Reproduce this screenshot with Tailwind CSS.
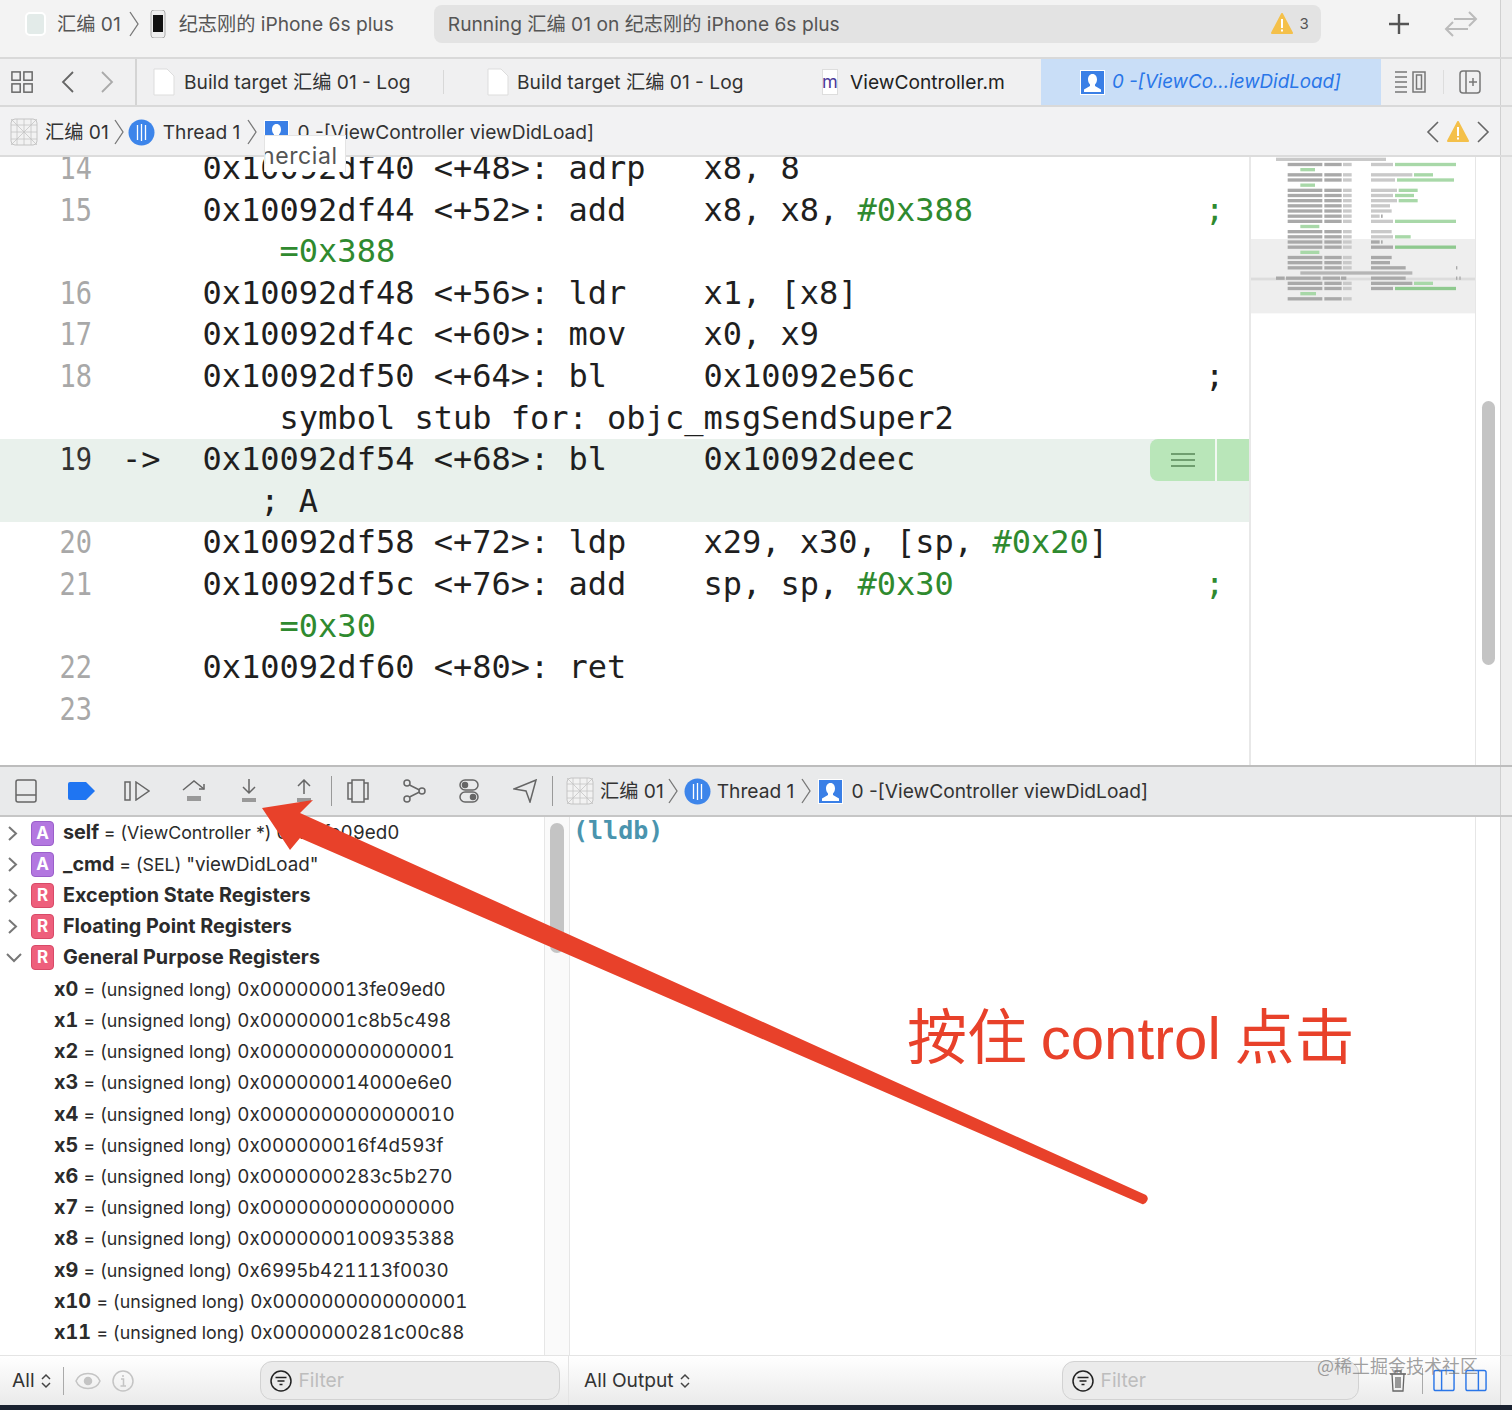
<!DOCTYPE html>
<html lang="en">
<head>
  <meta charset="UTF-8">
  <title>Xcode debugger</title>
  <script src="https://cdn.jsdelivr.net/npm/@tailwindcss/browser@4"></script>
</head>
<body class="bg-white">
<div class="relative w-[1512px] h-[1410px] overflow-hidden flex flex-col font-['Inter','Noto_Sans_CJK_SC',sans-serif] text-[#333]">

  <!-- toolbar -->
  <div class="h-[59px] shrink-0 flex bg-[#f3f3f3] border-b-2 border-[#d9d9d9]">
    <div class="w-[1500px] flex items-center text-[19.2px] text-[#555] pb-[9px]">
      <div class="ml-[25px] w-[21px] h-[24px] rounded-[5px] bg-[#e3ebe9] border-2 border-white"></div>
      <span class="ml-[11px]">汇编 01</span>
      <svg class="ml-[8px]" width="10" height="26" viewBox="0 0 10 26" fill="none" stroke="#777" stroke-width="1.3"><path d="M1 1l8 12L1 25"/></svg>
      <svg class="ml-[11px]" width="16" height="28" viewBox="0 0 16 28"><rect x="1" width="14" height="28" rx="3" fill="#eee" stroke="#aaa"/><rect x="3" y="5" width="10" height="17" fill="#111"/></svg>
      <span class="ml-[13px]">纪志刚的 iPhone 6s plus</span>
      <div class="ml-[40px] w-[887px] h-[38px] rounded-[8px] bg-[#e3e3e3] flex items-center pl-[14px] pr-[12px]">
        <span>Running 汇编 01 on 纪志刚的 iPhone 6s plus</span>
        <svg class="ml-auto" width="22" height="22" viewBox="0 0 22 22"><path d="M11 1L21 20H1z" fill="#f4c04a" stroke="#f4c04a" stroke-width="2" stroke-linejoin="round"/><rect x="10" y="6" width="2" height="9" fill="#fff"/><rect x="10" y="16.500" width="2" height="2" fill="#fff"/></svg>
        <span class="ml-[7px] text-[15px]">3</span>
      </div>
      <svg class="ml-[67px]" width="22" height="22" viewBox="0 0 22 22" stroke="#555" stroke-width="2.400"><path d="M11 1v20M1 11h20"/></svg>
      <svg class="ml-[34px]" width="34" height="26" viewBox="0 0 34 26" fill="none" stroke="#bbb" stroke-width="2"><path d="M2 18h22M9 11l-7 7 7 7M10 8h22M25 1l7 7-7 7"/></svg>
    </div>
    <div class="flex-1 border-l border-[#d0d0d0] bg-[#eeeeee]"></div>
  </div>

  <!-- tabs -->
  <div class="h-[48px] shrink-0 flex bg-[#f0f0f1] border-b-2 border-[#d9d9d9] text-[19.2px] text-[#333]">
    <div class="w-[1500px] flex items-center">
      <div class="w-[137px] h-full flex items-center border-r-2 border-[#d4d4d4]">
        <svg class="ml-[11px]" width="23" height="23" viewBox="0 0 25 25" fill="none" stroke="#666" stroke-width="1.600"><rect x="1" y="1" width="9" height="9"/><rect x="14" y="1" width="9" height="9"/><rect x="1" y="14" width="9" height="9"/><rect x="14" y="14" width="9" height="9"/></svg>
        <svg class="ml-[27px]" width="14" height="22" viewBox="0 0 14 22" fill="none" stroke="#666" stroke-width="1.800"><path d="M12 1L2 11l10 10"/></svg>
        <svg class="ml-[25px]" width="14" height="22" viewBox="0 0 14 22" fill="none" stroke="#aaa" stroke-width="1.800"><path d="M2 1l10 10L2 21"/></svg>
      </div>
      <div class="w-[306px] flex items-center pl-[16px]">
        <svg width="22" height="28" viewBox="0 0 22 28"><path d="M1 1h13l7 7v19H1z" fill="#fff" stroke="#ddd"/></svg>
        <span class="ml-[9px]">Build target 汇编 01 - Log</span>
      </div>
      <div class="w-px h-[24px] bg-[#d8d8d8]"></div>
      <div class="w-[333px] flex items-center pl-[43px]">
        <svg width="22" height="28" viewBox="0 0 22 28"><path d="M1 1h13l7 7v19H1z" fill="#fff" stroke="#ddd"/></svg>
        <span class="ml-[8px]">Build target 汇编 01 - Log</span>
      </div>
      <div class="w-[264px] flex items-center pl-[45px]">
        <div class="w-[16px] h-[26px] bg-white border border-[#ddd] flex items-center justify-center text-[18px] text-[#4b3a9a]">m</div>
        <span class="ml-[12px] text-[#222]">ViewController.m</span>
      </div>
      <div class="w-[340px] h-full bg-[#c9def7] flex items-center pl-[39px] text-[#2a76e8] italic text-[18.8px]">
        <svg width="25" height="25" viewBox="0 0 25 25"><rect width="25" height="25" fill="#fff"/><rect x="1" y="1" width="23" height="23" fill="#3a7fe6"/><path d="M12.500 4c3 0 4.500 2.500 4.500 5.500 0 2-1 4-2 5v1.500l6 3.500V22H4v-2.500L10 16v-1.500c-1-1-2-3-2-5C8 6.500 9.500 4 12.500 4z" fill="#fff"/></svg>
        <span class="ml-[7px]">0 -[ViewCo...iewDidLoad]</span>
      </div>
      <svg class="ml-[14px]" width="32" height="24" viewBox="0 0 32 24" fill="none" stroke="#777" stroke-width="1.500"><path d="M0 2h12M0 7h12M0 12h12M0 17h12M0 22h12"/><rect x="18" y="2" width="12" height="20"/><rect x="21.500" y="5" width="5" height="14"/></svg>
      <div class="ml-[16px] w-px h-[24px] bg-[#ddd]"></div>
      <svg class="ml-[15px]" width="22" height="24" viewBox="0 0 22 24" fill="none" stroke="#777" stroke-width="1.500"><rect x="1" y="1" width="20" height="22" rx="3"/><path d="M7 1v22M14 8v8M10 12h8"/></svg>
    </div>
    <div class="flex-1 border-l border-[#d0d0d0] bg-[#eeeeee]"></div>
  </div>

  <!-- jump bar -->
  <div class="h-[50px] shrink-0 flex bg-[#f2f2f3] border-b-2 border-[#dcdcdc] text-[19.2px] text-[#333]">
    <div class="w-[1500px] flex items-center pt-[2px]">
      <svg class="ml-[10px]" width="28" height="28" viewBox="0 0 28 28" fill="#f2f2f2" stroke="#c4c4c4"><rect x="1" y="1" width="26" height="26" rx="4"/><path d="M1 7h26M1 14h26M1 21h26M7 1v26M14 1v26M21 1v26M1 1l26 26M27 1L1 27" stroke-width=".8"/></svg>
      <span class="ml-[7px]">汇编 01</span>
      <svg class="ml-[5px]" width="10" height="26" viewBox="0 0 10 26" fill="none" stroke="#777" stroke-width="1.300"><path d="M1 1l8 12L1 25"/></svg>
      <svg class="ml-[4px]" width="27" height="27" viewBox="0 0 27 27"><circle cx="13.500" cy="13.500" r="13" fill="#3d85ea"/><path d="M9.500 6v15M13.500 5v17M17.500 6v15" stroke="#fff" stroke-width="1.300"/></svg>
      <span class="ml-[8px]">Thread 1</span>
      <svg class="ml-[7px]" width="10" height="26" viewBox="0 0 10 26" fill="none" stroke="#777" stroke-width="1.300"><path d="M1 1l8 12L1 25"/></svg>
      <svg class="ml-[7px]" width="25" height="25" viewBox="0 0 25 25"><rect width="25" height="25" fill="#fff"/><rect x="1" y="1" width="23" height="23" fill="#3a7fe6"/><path d="M12.500 4c3 0 4.500 2.500 4.500 5.500 0 2-1 4-2 5v1.500l6 3.500V22H4v-2.500L10 16v-1.500c-1-1-2-3-2-5C8 6.500 9.500 4 12.500 4z" fill="#fff"/></svg>
      <span class="ml-[8px]">0 -[ViewController viewDidLoad]</span>
      <svg class="ml-auto" width="13" height="22" viewBox="0 0 13 22" fill="none" stroke="#666" stroke-width="1.600"><path d="M12 1L2 11l10 10"/></svg>
      <svg class="ml-[8px]" width="22" height="22" viewBox="0 0 22 22"><path d="M11 1L21 20H1z" fill="#f4c04a" stroke="#f4c04a" stroke-width="2" stroke-linejoin="round"/><rect x="10" y="6" width="2" height="9" fill="#fff"/><rect x="10" y="16.500" width="2" height="2" fill="#fff"/></svg>
      <svg class="ml-[8px] mr-[10px]" width="13" height="22" viewBox="0 0 13 22" fill="none" stroke="#666" stroke-width="1.600"><path d="M1 1l10 10L1 21"/></svg>
    </div>
    <div class="flex-1 border-l border-[#d0d0d0] bg-[#eeeeee]"></div>
  </div>

  <!-- editor -->
  <div class="h-[608px] shrink-0 flex bg-white">
    <div id="code" class="w-[1249px] overflow-hidden font-['DejaVu_Sans_Mono',monospace] text-[32px] text-[#1f1f1f]"></div>
    <div class="w-[226px] border-l-2 border-[#e8e8e8]">
      <svg id="mini" width="224" height="160" viewBox="30 21 672 480"></svg>
    </div>
    <div class="w-[25px] border-l border-[#e6e6e6] pt-[244px] pl-[6px]">
      <div class="w-[13px] h-[264px] rounded-full bg-[#c4c4c4]"></div>
    </div>
    <div class="flex-1 border-l border-[#d0d0d0] bg-[#eeeeee]"></div>
  </div>

  <!-- debug bar -->
  <div class="h-[52px] shrink-0 flex bg-[#e9eaeb] border-t-2 border-b-2 border-t-[#bdbdbd] border-b-[#c6c6c6] text-[19.2px] text-[#333]">
    <div class="w-[1500px] flex items-center">
      <svg class="ml-[15px]" width="22" height="24" viewBox="0 0 22 24" fill="none" stroke="#666" stroke-width="1.500"><rect x="1" y="1" width="20" height="22" rx="2"/><path d="M1 16h20"/></svg>
      <svg class="ml-[31px]" width="27" height="18" viewBox="0 0 27 18"><path d="M2 0h16l9 9-9 9H2a2 2 0 0 1-2-2V2a2 2 0 0 1 2-2z" fill="#1f75f2"/></svg>
      <svg class="ml-[29px]" width="26" height="20" viewBox="0 0 26 20" fill="none" stroke="#666" stroke-width="1.500"><rect x="1" y="1" width="5" height="18"/><path d="M12 1l13 9-13 9z"/></svg>
      <svg class="ml-[32px]" width="24" height="22" viewBox="0 0 24 22" fill="none" stroke="#666" stroke-width="1.500"><path d="M1 10L12 1l10 8"/><path d="M22 4v5h-5"/><path d="M5 16h14v5H5z" fill="#999" stroke="none"/></svg>
      <svg class="ml-[34px]" width="18" height="24" viewBox="0 0 18 24" fill="none" stroke="#666" stroke-width="1.500"><path d="M9 0v14M3 8l6 6 6-6"/><path d="M2 19h14v4H2z" fill="#999" stroke="none"/></svg>
      <svg class="ml-[37px]" width="18" height="24" viewBox="0 0 18 24" fill="none" stroke="#666" stroke-width="1.500"><path d="M9 15V1M3 7l6-6 6 6"/><path d="M2 19h14v4H2z" fill="#999" stroke="none"/></svg>
      <div class="ml-[18px] w-px h-[30px] bg-[#999]"></div>
      <svg class="ml-[15px]" width="22" height="24" viewBox="0 0 22 24" fill="none" stroke="#666" stroke-width="1.500"><rect x="5" y="1" width="12" height="22"/><path d="M5 4H1v16h4M17 4h4v16h-4"/></svg>
      <svg class="ml-[33px]" width="24" height="24" viewBox="0 0 24 24" fill="none" stroke="#666" stroke-width="1.500"><circle cx="5" cy="4" r="3"/><circle cx="5" cy="20" r="3"/><circle cx="20" cy="12" r="3"/><path d="M7.500 6l10 5M7.500 18l10-5"/></svg>
      <svg class="ml-[33px]" width="20" height="24" viewBox="0 0 20 24" fill="none" stroke="#666" stroke-width="1.500"><rect x="1" y="1" width="18" height="10" rx="5"/><rect x="1" y="13" width="18" height="10" rx="5"/><circle cx="6" cy="6" r="2.500" fill="#666"/><circle cx="14" cy="18" r="2.500" fill="#666"/></svg>
      <svg class="ml-[34px]" width="24" height="24" viewBox="0 0 24 24" fill="none" stroke="#666" stroke-width="1.500"><path d="M1 10L23 1l-6 22-4-11z"/></svg>
      <div class="ml-[15px] w-px h-[30px] bg-[#999]"></div>
      <svg class="ml-[13px]" width="28" height="28" viewBox="0 0 28 28" fill="#f2f2f2" stroke="#c4c4c4"><rect x="1" y="1" width="26" height="26" rx="4"/><path d="M1 7h26M1 14h26M1 21h26M7 1v26M14 1v26M21 1v26M1 1l26 26M27 1L1 27" stroke-width=".8"/></svg>
      <span class="ml-[6px]">汇编 01</span>
      <svg class="ml-[4px]" width="10" height="26" viewBox="0 0 10 26" fill="none" stroke="#777" stroke-width="1.300"><path d="M1 1l8 12L1 25"/></svg>
      <svg class="ml-[6px]" width="27" height="27" viewBox="0 0 27 27"><circle cx="13.500" cy="13.500" r="13" fill="#3d85ea"/><path d="M9.500 6v15M13.500 5v17M17.500 6v15" stroke="#fff" stroke-width="1.300"/></svg>
      <span class="ml-[6px]">Thread 1</span>
      <svg class="ml-[7px]" width="10" height="26" viewBox="0 0 10 26" fill="none" stroke="#777" stroke-width="1.300"><path d="M1 1l8 12L1 25"/></svg>
      <svg class="ml-[7px]" width="25" height="25" viewBox="0 0 25 25"><rect width="25" height="25" fill="#fff"/><rect x="1" y="1" width="23" height="23" fill="#3a7fe6"/><path d="M12.500 4c3 0 4.500 2.500 4.500 5.500 0 2-1 4-2 5v1.500l6 3.500V22H4v-2.500L10 16v-1.500c-1-1-2-3-2-5C8 6.500 9.500 4 12.500 4z" fill="#fff"/></svg>
      <span class="ml-[8px]">0 -[ViewController viewDidLoad]</span>
    </div>
    <div class="flex-1 border-l border-[#d0d0d0] bg-[#eeeeee]"></div>
  </div>

  <!-- debug panes -->
  <div class="h-[538px] shrink-0 flex bg-white">
    <div id="vars" class="w-[544px] overflow-hidden pt-[0.6px] text-[19.8px] text-[#2b2b2b]"></div>
    <div class="w-[26px] border-x border-[#e6e6e6] bg-[#fafafa] pl-[5px] pt-[6px]">
      <div class="w-[14px] h-[130px] rounded-full bg-[#c4c4c4]"></div>
    </div>
    <div class="w-[905px] pl-[3px] font-['DejaVu_Sans_Mono',monospace] font-bold text-[25px] leading-[28px] text-[#4a94ae]">(lldb)</div>
    <div class="w-[25px] border-l border-[#e6e6e6]"></div>
    <div class="flex-1 border-l border-[#d0d0d0] bg-[#eeeeee]"></div>
  </div>

  <!-- bottom bar -->
  <div class="h-[50px] shrink-0 flex bg-linear-to-b from-white to-[#eaeaea] text-[19.2px] text-[#333] border-t border-[#e4e4e4]">
    <div class="w-[569px] flex items-center border-r border-[#e4e4e4]">
      <span class="ml-[12px]">All</span>
      <svg class="ml-[6px]" width="10" height="16" viewBox="0 0 10 16" fill="none" stroke="#444" stroke-width="1.500"><path d="M1 6l4-4 4 4M1 10l4 4 4-4"/></svg>
      <div class="ml-[12px] w-px h-[28px] bg-[#aaa]"></div>
      <svg class="ml-[11px]" width="26" height="18" viewBox="0 0 26 18" fill="none" stroke="#c4c4c4" stroke-width="1.500"><path d="M1 9c4-10 20-10 24 0-4 10-20 10-24 0z"/><circle cx="13" cy="9" r="3.500" fill="#c4c4c4"/></svg>
      <svg class="ml-[11px]" width="22" height="22" viewBox="0 0 22 22" fill="none" stroke="#c4c4c4" stroke-width="1.500"><circle cx="11" cy="11" r="10"/><path d="M9 9h2.500v7M8.500 16h5.500M11 5v2"/></svg>
      <div class="ml-[126px] w-[300px] h-[39px] rounded-[12px] border border-[#d2d2d2] bg-[#ebebeb] flex items-center pl-[9px] text-[#bdbdbd]">
        <svg width="22" height="22" viewBox="0 0 22 22" fill="none" stroke="#222" stroke-width="1.500"><circle cx="11" cy="11" r="10"/><path d="M5.500 7.500h11M7.500 11h7M9.500 14.500h3"/></svg>
        <span class="ml-[7px]">Filter</span>
      </div>
    </div>
    <div class="w-[931px] flex items-center">
      <span class="ml-[15px]">All Output</span>
      <svg class="ml-[6px]" width="10" height="16" viewBox="0 0 10 16" fill="none" stroke="#444" stroke-width="1.500"><path d="M1 6l4-4 4 4M1 10l4 4 4-4"/></svg>
      <div class="ml-[372px] w-[297px] h-[39px] rounded-[12px] border border-[#d2d2d2] bg-[#ebebeb] flex items-center pl-[9px] text-[#bdbdbd]">
        <svg width="22" height="22" viewBox="0 0 22 22" fill="none" stroke="#222" stroke-width="1.500"><circle cx="11" cy="11" r="10"/><path d="M5.500 7.500h11M7.500 11h7M9.500 14.500h3"/></svg>
        <span class="ml-[7px]">Filter</span>
      </div>
      <svg class="ml-[30px]" width="18" height="22" viewBox="0 0 18 22" fill="none" stroke="#666" stroke-width="1.300"><path d="M1 4h16M6 4V1h6v3M3 4l1 17h10l1-17M7 7v11M9 7v11M11 7v11"/></svg>
      <div class="ml-[15px] w-px h-[26px] bg-[#aaa]"></div>
      <svg class="ml-[10px]" width="22" height="23" viewBox="0 0 23 23" fill="none" stroke="#2a76e8" stroke-width="1.500"><rect x="1" y="1" width="21" height="21" rx="2"/><path d="M9 1v21"/></svg>
      <svg class="ml-[10px]" width="22" height="23" viewBox="0 0 23 23" fill="none" stroke="#2a76e8" stroke-width="1.500"><rect x="1" y="1" width="21" height="21" rx="2"/><path d="M14 1v21"/></svg>
    </div>
    <div class="flex-1 bg-[#eeeeee] border-l border-[#d0d0d0]"></div>
  </div>
  <div class="flex-1 bg-[#1a2230]"></div>

  <!-- annotations lying over the screenshot -->
  <div class="absolute left-[264px] top-[135px] w-[82px] h-[37px] bg-white border border-[#e4e4e4] border-b-0 overflow-hidden text-[23px] tracking-[0.6px] text-[#555] leading-[40px] indent-[-4px] whitespace-nowrap">nercial</div>
  <svg class="absolute left-0 top-0 pointer-events-none" width="1512" height="1410" viewBox="0 0 1512 1410">
    <path d="M262 808L313 800L300 813L1146 1195Q1149 1198 1147 1201Q1145 1205 1142 1204L300 838L290 850z" fill="#e8412a"/>
  </svg>
  <div class="absolute left-[907px] top-[999px] text-[60px] leading-[80px] text-[#e8412a] whitespace-nowrap [word-spacing:-3px] font-['Liberation_Sans','Noto_Sans_CJK_SC',sans-serif]">按住 control 点击</div>
  <div class="absolute left-[1317px] top-[1354px] text-[18px] leading-[22px] text-[#777]/70 whitespace-nowrap font-['Noto_Sans_CJK_SC',sans-serif]">@稀土掘金技术社区</div>
</div>

<script>
  const G = c => `<span class="text-[#2f8a2f]">${c}</span>`;
  const lines = [
    { n: '14', c: '0x10092df40 &lt;+48&gt;: adrp   x8, 8' },
    { n: '15', c: '0x10092df44 &lt;+52&gt;: add    x8, x8, ' + G('#0x388'), semi: 1 },
    { c: '    ' + G('=0x388') },
    { n: '16', c: '0x10092df48 &lt;+56&gt;: ldr    x1, [x8]' },
    { n: '17', c: '0x10092df4c &lt;+60&gt;: mov    x0, x9' },
    { n: '18', c: '0x10092df50 &lt;+64&gt;: bl     0x10092e56c', semi: 2 },
    { c: '    symbol stub for: objc_msgSendSuper2' },
    { n: '19', c: '0x10092df54 &lt;+68&gt;: bl     0x10092deec', cur: 1 },
    { c: '   ; A', cur: 2 },
    { n: '20', c: '0x10092df58 &lt;+72&gt;: ldp    x29, x30, [sp, ' + G('#0x20') + ']' },
    { n: '21', c: '0x10092df5c &lt;+76&gt;: add    sp, sp, ' + G('#0x30'), semi: 1 },
    { c: '    ' + G('=0x30') },
    { n: '22', c: '0x10092df60 &lt;+80&gt;: ret' },
    { n: '23', c: '' },
  ];
  document.getElementById('code').innerHTML = lines.map((l, i) => {
    const bg = l.cur ? 'bg-[#e9f1ec]' : '';
    const num = l.cur === 1 ? 'text-[#333]' : 'text-[#a8a8a8]';
    const semi = l.semi === 1 ? '<span class="absolute left-[1205px] text-[#2f8a2f]">;</span>'
      : l.semi === 2 ? '<span class="absolute left-[1205px]">;</span>' : '';
    const arrow = l.cur === 1 ? '<span class="absolute left-[122px]">-&gt;</span>' : '';
    const badge = l.cur === 1 ? '<div class="absolute left-[1150px] top-0 w-[99px] h-[42px] flex bg-[#b9e6b9] rounded-l-[8px]"><div class="w-[65px] flex flex-col justify-center items-center gap-[4px]"><i class="block w-[24px] h-[2px] bg-[#6f9e6f]"></i><i class="block w-[24px] h-[2px] bg-[#6f9e6f]"></i><i class="block w-[24px] h-[2px] bg-[#6f9e6f]"></i></div><div class="w-[2px] bg-[#f2f8f2]"></div></div>' : '';
    return `<div class="relative h-[41.6px] leading-[41.6px] flex whitespace-pre ${bg} ${i === 0 ? 'mt-[-9px]' : ''}">
      <span class="w-[92px] text-right text-[27px] scale-y-[1.15] ${num}">${l.n || ''}</span><span class="w-[111px]"></span>${arrow}<span class="ml-[-0.5px]">${l.c}</span>${semi}${badge}</div>`;
  }).join('');

  // name, type, value, tag letter, disclosure (1 closed, 2 open)
  const rows = [
    ['self', '(ViewController *)', ' 0x13fe09ed0', 'A', 1],
    ['_cmd', '(SEL)', ' "viewDidLoad"', 'A', 1],
    ['Exception State Registers', '', '', 'R', 1],
    ['Floating Point Registers', '', '', 'R', 1],
    ['General Purpose Registers', '', '', 'R', 2],
    ['x0', '(unsigned long)', ' 0x000000013fe09ed0'],
    ['x1', '(unsigned long)', ' 0x00000001c8b5c498'],
    ['x2', '(unsigned long)', ' 0x0000000000000001'],
    ['x3', '(unsigned long)', ' 0x000000014000e6e0'],
    ['x4', '(unsigned long)', ' 0x0000000000000010'],
    ['x5', '(unsigned long)', ' 0x000000016f4d593f'],
    ['x6', '(unsigned long)', ' 0x0000000283c5b270'],
    ['x7', '(unsigned long)', ' 0x0000000000000000'],
    ['x8', '(unsigned long)', ' 0x0000000100935388'],
    ['x9', '(unsigned long)', ' 0x6995b421113f0030'],
    ['x10', '(unsigned long)', ' 0x0000000000000001'],
    ['x11', '(unsigned long)', ' 0x0000000281c00c88'],
  ];
  document.getElementById('vars').innerHTML = rows.map(([name, type, val, tag, open]) => {
    const value = type ? ` <span class="font-normal text-[17.8px]">= ${type}</span><span class="font-normal text-[18.8px] tabular-nums">${val}</span>` : '';
    if (!tag) return `<div class="h-[31.2px] leading-[31.2px] pl-[54px] whitespace-pre font-bold tabular-nums ${name === 'x0' ? 'mt-[0.4px]' : ''}">${name}${value}</div>`;
    const col = tag === 'A' ? 'bg-[#b377e0] border-[#9a5fca]' : 'bg-[#ee5f7c] border-[#d84a68]';
    const chev = open === 2
      ? '<svg width="16" height="10" viewBox="0 0 16 10" fill="none" stroke="#777" stroke-width="2"><path d="M1 1l7 7 7-7"/></svg>'
      : '<svg class="ml-[2px]" width="10" height="15" viewBox="0 0 10 15" fill="none" stroke="#777" stroke-width="2"><path d="M1 1l7 6.500-7 6.500"/></svg>';
    return `<div class="h-[31.2px] flex items-center whitespace-pre font-bold">
      <span class="w-[31px] pl-[6px] flex">${chev}</span>
      <span class="w-[23px] h-[25px] rounded-[4px] border text-white text-[17px] leading-[23px] text-center ${col}">${tag}</span>
      <span class="ml-[9px]">${name}${value}</span></div>`;
  }).join('');

  // minimap bars, one row every 15.5 units: [x, width, kind]
  const K = '#a9a9a9', L = '#c9c9c9', V = '#a8d8a8';
  const addr = [[140, 104, K], [250, 52, K], [306, 26, L]];
  const mini = [
    [[105, 330, L]],
    [...addr, [390, 66, L], [462, 183, V]],
    [[178, 44, V]],
    [...addr, [390, 124, L], [519, 57, V]],
    [...addr, [390, 72, L], [468, 171, V]],
    [[178, 44, V]],
    [...addr, [390, 78, L], [473, 57, V]],
    [...addr, [390, 66, L], [462, 57, V]],
    [...addr, [390, 78, L], [473, 57, V]],
    [...addr, [390, 57, L]],
    [...addr, [390, 62, L]],
    [...addr, [390, 26, L], [420, 5, K]],
    [...addr, [390, 66, L], [462, 183, V]],
    [[178, 57, V]],
    [...addr, [390, 62, L]],
    [...addr, [390, 66, L], [462, 47, V]],
    [...addr, [390, 26, K], [420, 5, K]],
    [...addr, [390, 66, K], [462, 183, '#8fc98f']],
    [[178, 57, V]],
    [...addr, [390, 62, K]],
    [...addr, [390, 57, K]],
    [...addr, [390, 104, K], [645, 4, K]],
    [[178, 336, '#b5b5b5']],
    [[105, 26, K], [135, 104, K], [245, 52, K], [300, 16, K], [390, 104, K], [645, 4, K], [655, 4, K]],
    [...addr, [390, 124, K], [519, 57, V]],
    [...addr, [390, 66, K], [462, 183, '#8fc98f']],
    [[178, 47, V]],
    [...addr],
  ];
  let svg = '<rect x="30" y="267" width="672" height="223" fill="#eeeeee"/><rect x="30" y="383" width="672" height="8" fill="#dcdcdc"/>';
  mini.forEach((bars, i) => {
    bars.forEach(([x, w, c]) => { svg += `<rect x="${x}" y="${23 + i * 15.5}" width="${w}" height="10" fill="${c}"/>`; });
  });
  document.getElementById('mini').innerHTML = svg;
</script>
</body>
</html>
